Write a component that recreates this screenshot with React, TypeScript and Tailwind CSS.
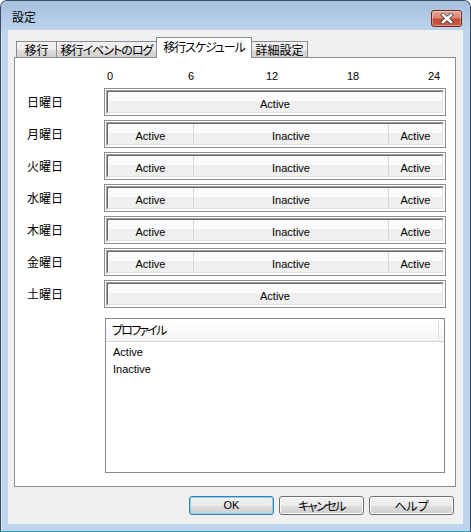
import React from "react";

const LAT = "font-['Liberation_Sans','Noto_Sans_CJK_JP',sans-serif]";
const JP = "font-['Noto_Sans_CJK_JP',sans-serif] [font-feature-settings:'palt']";

type Seg = { label: string; cls: string };

const FULL: Seg[] = [{ label: "Active", cls: "flex-1" }];
const SPLIT: Seg[] = [
  { label: "Active", cls: "w-[85px]" },
  { label: "Inactive", cls: "flex-1 border-l border-[#d8d8d8]" },
  { label: "Active", cls: "w-[54px] border-l border-[#d8d8d8]" },
];

const DAYS: { name: string; segs: Seg[] }[] = [
  { name: "日曜日", segs: FULL },
  { name: "月曜日", segs: SPLIT },
  { name: "火曜日", segs: SPLIT },
  { name: "水曜日", segs: SPLIT },
  { name: "木曜日", segs: SPLIT },
  { name: "金曜日", segs: SPLIT },
  { name: "土曜日", segs: FULL },
];

function Bar({ segs }: { segs: Seg[] }) {
  return (
    <div className="h-[28px] w-[342px] border border-[#8e8f8f] bg-white p-px">
      <div className="h-full border border-t-[#a0a0a0] border-l-[#a0a0a0] border-r-white border-b-white">
        <div className="flex h-full border border-t-[#696969] border-l-[#696969] border-r-[#e3e3e3] border-b-[#e3e3e3] bg-[linear-gradient(to_bottom,#fcfcfc_0%,#fcfcfc_45%,#f0f0f0_45%,#f0f0f0_100%)]">
          {segs.map((s, i) => (
            <div
              key={i}
              className={`${s.cls} flex h-full justify-center pt-[6px] text-[11px] leading-[13px] text-black ${LAT}`}
            >
              {s.label}
            </div>
          ))}
        </div>
      </div>
    </div>
  );
}

function Btn({ children, def, cls }: { children: React.ReactNode; def?: boolean; cls: string }) {
  return (
    <div
      className={`flex h-[19px] w-[85px] items-center justify-center whitespace-nowrap rounded-[3px] border bg-[linear-gradient(to_bottom,#f2f2f2_0%,#ebebeb_50%,#dddddd_50%,#cfcfcf_100%)] text-black ${cls} ${
        def
          ? "border-[#3c7fb1] shadow-[inset_0_0_0_1px_#7fd3f6]"
          : "border-[#707070] shadow-[inset_0_0_0_1px_#fbfbfb]"
      }`}
    >
      {children}
    </div>
  );
}

export default function App() {
  return (
    <div className="h-[532px] w-[471px] bg-white">
      <div className="flex h-[532px] w-[471px] flex-col rounded-t-[7px] border border-[#3a4b5e] border-b-[#2b9fc4] bg-[#bdd4ec] shadow-[inset_1px_1px_0_#d8e6f5]">
        {/* title bar */}
        <div className="flex h-[29px] items-start justify-between rounded-t-[6px] bg-[linear-gradient(to_bottom,#a6bfdc,#bdd4ec)] pl-[11px] pr-[8px]">
          <span className={`mt-[8px] text-[12px] leading-[16px] text-black ${JP}`}>設定</span>
          <div className="mt-[9px] flex h-[17px] w-[31px] items-center justify-center rounded-[3px] border border-[#6b2a1f] bg-[linear-gradient(to_bottom,#e8a897_0%,#d98670_45%,#c24a32_55%,#cf5c45_100%)] shadow-[inset_0_0_0_1px_rgba(255,255,255,0.35)]">
            <svg width="14" height="11" viewBox="0 0 14 11">
              <path d="M3 2 L11 9 M11 2 L3 9" stroke="#4d4d4d" strokeWidth="4.2" strokeLinecap="square" fill="none" />
              <path d="M3 2 L11 9 M11 2 L3 9" stroke="#ffffff" strokeWidth="2.4" strokeLinecap="square" fill="none" />
            </svg>
          </div>
        </div>

        {/* client */}
        <div className="mx-[7px] flex h-[494px] flex-col bg-[#f0f0f0]">
          {/* tabs */}
          <div className={`ml-[8px] mt-[7px] flex h-[20px] items-end whitespace-nowrap text-[12px] text-black ${JP}`}>
            <div className="flex h-[16px] w-[41px] items-center justify-center border border-b-0 border-[#898c95] bg-[linear-gradient(to_bottom,#f2f2f2_0%,#ebebeb_50%,#dddddd_50%,#cfcfcf_100%)] pt-px leading-[14px]">
              移行
            </div>
            <div className="flex h-[16px] w-[99px] items-center justify-center border-t border-[#898c95] bg-[linear-gradient(to_bottom,#f2f2f2_0%,#ebebeb_50%,#dddddd_50%,#cfcfcf_100%)] pt-px leading-[14px] tracking-[-1px]">
              移行イベントのログ
            </div>
            <div className="relative z-10 -mb-px flex h-[21px] w-[96px] items-center justify-center border border-b-0 border-[#898c95] bg-white pb-[2px] leading-[14px] tracking-[-1.1px]">
              移行スケジュール
            </div>
            <div className="flex h-[16px] w-[56px] items-center justify-center border-t border-r border-[#898c95] bg-[linear-gradient(to_bottom,#f2f2f2_0%,#ebebeb_50%,#dddddd_50%,#cfcfcf_100%)] pt-px leading-[14px]">
              詳細設定
            </div>
          </div>

          {/* panel */}
          <div className="ml-[6px] flex h-[430px] w-[442px] flex-col border border-[#898c95] bg-white">
            <div className={`mt-[12px] flex h-[13px] gap-[57px] pl-[83px] text-[11px] leading-[13px] text-black ${LAT}`}>
              <span className="w-[24px] text-center">0</span>
              <span className="w-[24px] text-center">6</span>
              <span className="w-[24px] text-center">12</span>
              <span className="w-[24px] text-center">18</span>
              <span className="w-[24px] text-center">24</span>
            </div>

            <div className="mt-[5px] flex flex-col gap-[4px]">
              {DAYS.map((d) => (
                <div key={d.name} className="flex h-[28px] items-center pl-[12px]">
                  <span className={`w-[77px] text-[12px] leading-[16px] text-black ${JP}`}>{d.name}</span>
                  <Bar segs={d.segs} />
                </div>
              ))}
            </div>

            <div className="ml-[90px] mt-[10px] flex h-[155px] w-[340px] flex-col border border-[#828790] bg-white">
              <div className="flex h-[23px] shrink-0 border-b border-[#d5d5d5] bg-[linear-gradient(to_bottom,#ffffff,#f3f4f6)]">
                <div className={`flex w-[333px] items-center whitespace-nowrap border-r border-[#dcdfe3] pl-[6px] text-[12px] leading-[16px] tracking-[-1.8px] text-black ${JP}`}>
                  プロファイル
                </div>
              </div>
              <div className={`pl-[7px] pt-[2px] text-[11px] leading-[17px] text-black ${LAT}`}>
                <div>Active</div>
                <div>Inactive</div>
              </div>
            </div>
          </div>

          {/* buttons */}
          <div className="mt-[9px] flex justify-end gap-[5px] pr-[9px]">
            <Btn def cls={`text-[11px] ${LAT}`}>OK</Btn>
            <Btn cls={`text-[12px] tracking-[-1.5px] ${JP}`}>キャンセル</Btn>
            <Btn cls={`text-[12px] ${JP}`}>ヘルプ</Btn>
          </div>
        </div>
      </div>
    </div>
  );
}
